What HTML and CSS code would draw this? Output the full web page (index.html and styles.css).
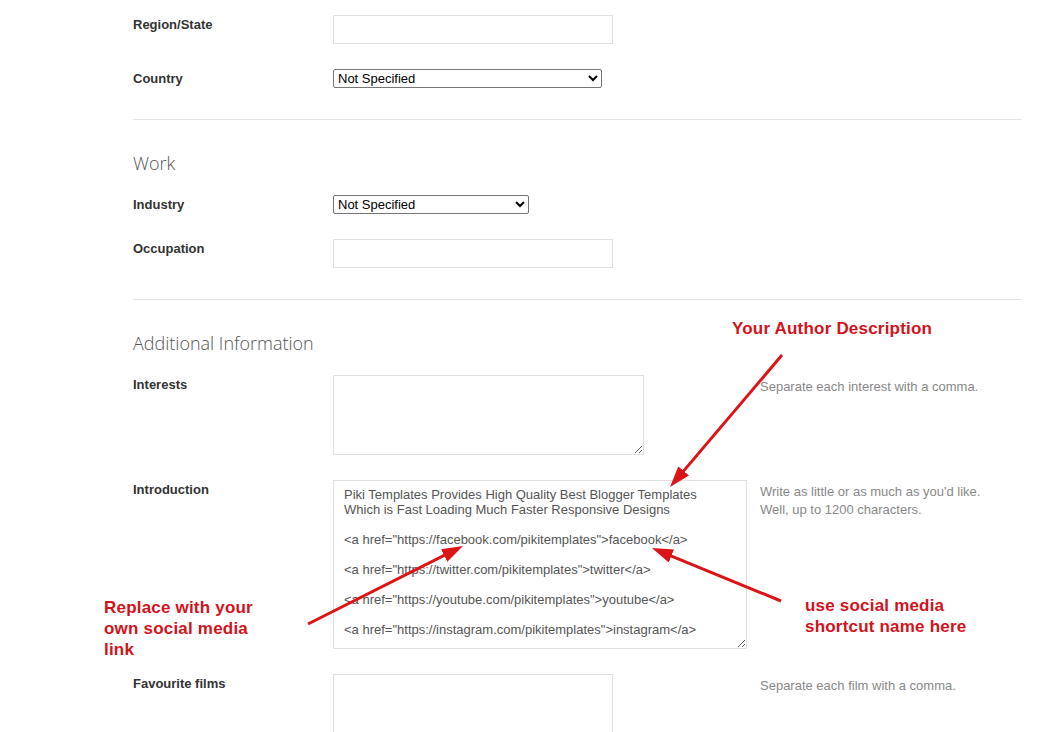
FILE: index.html
```html
<!DOCTYPE html>
<html lang="en">
<head>
    <meta charset="UTF-8">
    <meta name="viewport" content="width=device-width, initial-scale=1.0">
    <title>Edit Profile</title>
    <link rel="stylesheet" href="styles.css">
</head>
<body>
    <div class="page">
        <div class="section">
            <div class="row">
                <label for="region">Region/State</label>
                <div class="field"><input type="text" id="region" class="text-input"></div>
            </div>
            <div class="row">
                <label for="country">Country</label>
                <div class="field">
                    <select id="country" class="country-select">
                        <option>Not Specified</option>
                    </select>
                </div>
            </div>
        </div>

        <div class="section">
            <h2>Work</h2>
            <div class="row">
                <label for="industry">Industry</label>
                <div class="field">
                    <select id="industry" class="industry-select">
                        <option>Not Specified</option>
                    </select>
                </div>
            </div>
            <div class="row">
                <label for="occupation">Occupation</label>
                <div class="field"><input type="text" id="occupation" class="text-input"></div>
            </div>
        </div>

        <div class="section">
            <h2>Additional Information</h2>
            <div class="row">
                <label for="interests">Interests</label>
                <div class="field"><textarea id="interests" class="interests"></textarea></div>
                <div class="hint">Separate each interest with a comma.</div>
            </div>
            <div class="row">
                <label for="intro">Introduction</label>
                <div class="field"><textarea id="intro" class="intro">Piki Templates Provides High Quality Best Blogger Templates
Which is Fast Loading Much Faster Responsive Designs

&lt;a href=&quot;https://facebook.com/pikitemplates&quot;&gt;facebook&lt;/a&gt;

&lt;a href=&quot;https://twitter.com/pikitemplates&quot;&gt;twitter&lt;/a&gt;

&lt;a href=&quot;https://youtube.com/pikitemplates&quot;&gt;youtube&lt;/a&gt;

&lt;a href=&quot;https://instagram.com/pikitemplates&quot;&gt;instagram&lt;/a&gt;</textarea></div>
                <div class="hint">Write as little or as much as you'd like.<br>Well, up to 1200 characters.</div>
            </div>
            <div class="row">
                <label for="films">Favourite films</label>
                <div class="field"><textarea id="films" class="films"></textarea></div>
                <div class="hint">Separate each film with a comma.</div>
            </div>
        </div>

        <!-- annotations -->
        <div class="note note-author">Your Author Description</div>
        <div class="note note-replace">Replace with your<br>own social media<br>link</div>
        <div class="note note-shortcut">use social media<br>shortcut name here</div>

        <svg class="arrows" width="1050" height="732" viewBox="0 0 1050 732">
            <defs>
                <marker id="head" markerUnits="userSpaceOnUse" markerWidth="22" markerHeight="14" refX="15" refY="7" orient="auto">
                    <path d="M0,0 L21,7 L0,14 z" fill="#dc1418"/>
                </marker>
            </defs>
            <line x1="782" y1="355" x2="673.9" y2="482.4" stroke="#dc1418" stroke-width="3" marker-end="url(#head)"/>
            <line x1="308" y1="624" x2="457.6" y2="548.7" stroke="#dc1418" stroke-width="3" marker-end="url(#head)"/>
            <line x1="781" y1="601" x2="657.5" y2="550.3" stroke="#dc1418" stroke-width="3" marker-end="url(#head)"/>
        </svg>
    </div>
</body>
</html>
```

FILE: styles.css
```css
body {
    margin: 0;
    padding: 0;
    background-color: #fff;
    font-family: Arial, "Liberation Sans", sans-serif;
    font-size: 13px;
    color: #333;
}
.page {
    position: relative;
    width: 1050px;
    height: 732px;
    overflow: hidden;
}
.section {
    margin-left: 133px;
    width: 889px;
    padding-bottom: 6px;
}
.section:first-child {
    padding-top: 15px;
}
.section + .section {
    border-top: 1px solid #e6e6e6;
    padding-top: 31px;
}
h2 {
    margin: 0 0 20px;
    font-family: "Open Sans", sans-serif;
    font-weight: 300;
    font-size: 18px;
    line-height: 24px;
    color: #555;
}
.row {
    display: grid;
    grid-template-columns: 200px 427px 1fr;
    margin-bottom: 25px;
}
.row label {
    padding-top: 2px;
    font-weight: bold;
    line-height: 15px;
}
.field {
    display: flex;
}
.text-input {
    box-sizing: border-box;
    width: 280px;
    height: 29px;
    margin: 0;
    border: 1px solid #e0e0e0;
}
select {
    height: 19px;
    margin: 0;
    font-family: Arial, "Liberation Sans", sans-serif;
    font-size: 13px;
    color: #000;
    border: 1px solid #767676;
    border-radius: 2px;
    background: #fff;
}
.country-select {
    width: 269px;
}
.industry-select {
    width: 196px;
}
textarea {
    box-sizing: border-box;
    margin: 0;
    padding: 6px 10px;
    border: 1px solid #e0e0e0;
    font-family: Arial, "Liberation Sans", sans-serif;
    font-size: 13px;
    line-height: 15px;
    color: #555;
}
.interests {
    width: 311px;
    height: 80px;
}
.intro {
    width: 414px;
    height: 169px;
    overflow: hidden;
}
.films {
    width: 280px;
    height: 80px;
}
.hint {
    padding-top: 3px;
    line-height: 18px;
    color: #888;
}
.note {
    position: absolute;
    font-family: Arial, "Liberation Sans", sans-serif;
    font-weight: bold;
    font-size: 17px;
    line-height: 21px;
    letter-spacing: 0.2px;
    color: #d3131c;
}
.note-author {
    left: 732px;
    top: 318px;
}
.note-replace {
    left: 104px;
    top: 597px;
}
.note-shortcut {
    left: 805px;
    top: 595px;
}
.arrows {
    position: absolute;
    left: 0;
    top: 0;
    pointer-events: none;
}
```
